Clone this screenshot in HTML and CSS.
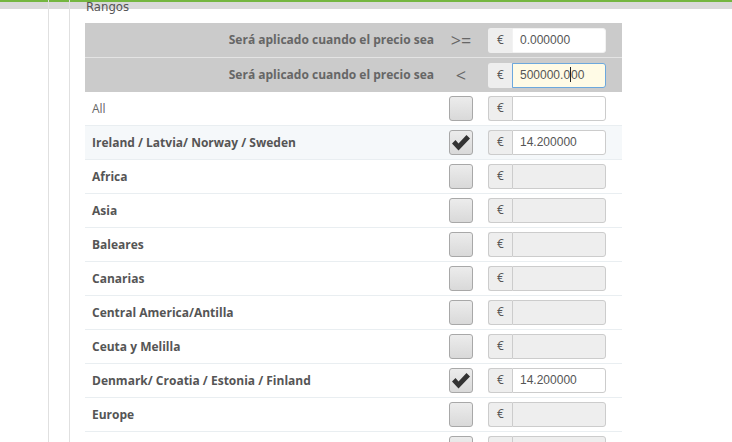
FILE: index.html
```html
<!DOCTYPE html>
<html lang="es">
  <head>
    <meta charset="UTF-8" />
    <meta name="viewport" content="width=device-width, initial-scale=1.0" />
    <title>Rangos</title>
    <link rel="stylesheet" href="styles.css">
  </head>
  <body>
    <div class="page">
      <div class="side"></div>
      <div class="rail"></div>
      <div class="content">
        <div class="legend">Rangos</div>

        <div class="ranges">
          <div class="row head">
            <div class="label">Será aplicado cuando el precio sea</div>
            <div class="op">&gt;=</div>
            <div class="group">
              <span class="addon">€</span>
              <div class="field">0.000000</div>
            </div>
          </div>
          <div class="row head">
            <div class="label">Será aplicado cuando el precio sea</div>
            <div class="op">&lt;</div>
            <div class="group">
              <span class="addon">€</span>
              <div class="field focus">500000.0<span class="caret"></span>00</div>
            </div>
          </div>

          <div class="row">
            <div class="label plain">All</div>
            <div class="op"><span class="check"></span></div>
            <div class="group">
              <span class="addon">€</span>
              <div class="field"></div>
            </div>
          </div>
          <div class="row alt">
            <div class="label">Ireland / Latvia/ Norway / Sweden</div>
            <div class="op">
              <span class="check">
                <svg width="20" height="18" viewBox="0 0 20 18"><path d="M1 9.5 L4.5 6 L7.5 9.5 L15.5 1 L19 4.5 L7.5 16.5 Z" fill="#333"/></svg>
              </span>
            </div>
            <div class="group">
              <span class="addon">€</span>
              <div class="field">14.200000</div>
            </div>
          </div>
          <div class="row">
            <div class="label">Africa</div>
            <div class="op"><span class="check"></span></div>
            <div class="group">
              <span class="addon">€</span>
              <div class="field off"></div>
            </div>
          </div>
          <div class="row">
            <div class="label">Asia</div>
            <div class="op"><span class="check"></span></div>
            <div class="group">
              <span class="addon">€</span>
              <div class="field off"></div>
            </div>
          </div>
          <div class="row">
            <div class="label">Baleares</div>
            <div class="op"><span class="check"></span></div>
            <div class="group">
              <span class="addon">€</span>
              <div class="field off"></div>
            </div>
          </div>
          <div class="row">
            <div class="label">Canarias</div>
            <div class="op"><span class="check"></span></div>
            <div class="group">
              <span class="addon">€</span>
              <div class="field off"></div>
            </div>
          </div>
          <div class="row">
            <div class="label">Central America/Antilla</div>
            <div class="op"><span class="check"></span></div>
            <div class="group">
              <span class="addon">€</span>
              <div class="field off"></div>
            </div>
          </div>
          <div class="row">
            <div class="label">Ceuta y Melilla</div>
            <div class="op"><span class="check"></span></div>
            <div class="group">
              <span class="addon">€</span>
              <div class="field off"></div>
            </div>
          </div>
          <div class="row">
            <div class="label">Denmark/ Croatia / Estonia / Finland</div>
            <div class="op">
              <span class="check">
                <svg width="20" height="18" viewBox="0 0 20 18"><path d="M1 9.5 L4.5 6 L7.5 9.5 L15.5 1 L19 4.5 L7.5 16.5 Z" fill="#333"/></svg>
              </span>
            </div>
            <div class="group">
              <span class="addon">€</span>
              <div class="field">14.200000</div>
            </div>
          </div>
          <div class="row">
            <div class="label">Europe</div>
            <div class="op"><span class="check"></span></div>
            <div class="group">
              <span class="addon">€</span>
              <div class="field off"></div>
            </div>
          </div>
          <div class="row">
            <div class="label"></div>
            <div class="op"><span class="check"></span></div>
            <div class="group">
              <span class="addon"></span>
              <div class="field off"></div>
            </div>
          </div>
        </div>
      </div>
    </div>
  </body>
</html>
```

FILE: styles.css
```css
body {
  margin: 0;
  background: linear-gradient(#74b640 0, #74b640 2px, #d9d9d9 2px, #d9d9d9 9px, #fff 9px);
  font-family: "Open Sans", sans-serif;
  color: #555;
  overflow: hidden;
}
.page {
  display: flex;
  height: 442px;
}
.side {
  width: 48px;
  border-right: 1px solid #e0e0e0;
}
.rail {
  width: 20px;
  border-right: 1px solid #e0e0e0;
}
.content {
  padding-left: 15px;
  width: 537px;
}
.legend {
  font-family: "DejaVu Sans Condensed", "DejaVu Sans", sans-serif;
  font-stretch: condensed;
  font-size: 13px;
  line-height: 14px;
  color: #555;
  margin-left: 1px;
  height: 23px;
}
.row {
  display: grid;
  grid-template-columns: 342px 24px 118px;
  column-gap: 15px;
  align-items: center;
  height: 33px;
  padding: 0 16px 0 7px;
  border-bottom: 1px solid #e9eef1;
}
.row.head {
  background-color: #cbcbcb;
  height: 34px;
  border-bottom: 1px solid #e4e4e4;
}
.row.head + .row.head {
  border-bottom: none;
}
.row.alt {
  background-color: #f5f8fa;
}
.label {
  font-size: 12px;
  font-weight: 700;
  color: #555;
  white-space: nowrap;
  line-height: 16px;
}
.head .label {
  text-align: right;
  color: #666;
}
.label.plain {
  font-weight: 400;
  color: #666;
}
.op {
  display: flex;
  justify-content: center;
  font-size: 18px;
  color: #666;
  line-height: 20px;
}
.check {
  width: 23px;
  height: 23px;
  border: 1px solid #a8a8a8;
  border-radius: 3px;
  background: linear-gradient(#ececec, #d9d9d9);
  display: flex;
  align-items: center;
  justify-content: center;
}
.group {
  display: flex;
  height: 25px;
}
.addon {
  width: 23px;
  border: 1px solid #ccc;
  border-right: none;
  border-radius: 3px 0 0 3px;
  background-color: #eee;
  font-size: 12px;
  line-height: 21px;
  text-align: center;
  color: #555;
}
.head .addon {
  border-color: #eee;
}
.field {
  flex: 1;
  border: 1px solid #ccc;
  border-radius: 0 3px 3px 0;
  background-color: #fff;
  padding: 0 7px;
  font-family: "Liberation Sans", sans-serif;
  font-size: 12px;
  line-height: 23px;
  color: #555;
}
.head .field {
  border-color: #f2f2f2;
}
.field.off {
  background-color: #eee;
}
.head .field.focus {
  background-color: #fffbe6;
  border-color: #6ca8dd;
}
.caret {
  display: inline-block;
  width: 1px;
  height: 15px;
  background-color: #222;
  vertical-align: -3px;
}
```
